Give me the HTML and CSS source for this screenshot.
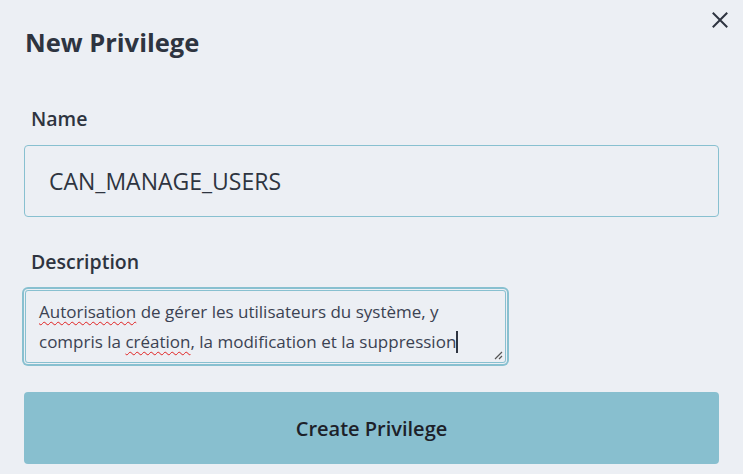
FILE: index.html
```html
<!DOCTYPE html>
<html lang="en">
<head>
<meta charset="utf-8">
<title>New Privilege</title>
<link rel="stylesheet" href="styles.css">
</head>
<body>
<div class="dialog">
  <button class="close" aria-label="Close">
    <svg width="16" height="16" viewBox="0 0 16 16"><path d="M1.5 1.5 L14.5 14.5 M14.5 1.5 L1.5 14.5" stroke="#2e3440" stroke-width="2" stroke-linecap="square" fill="none"/></svg>
  </button>
  <h2 class="title">New Privilege</h2>
  <form class="form">
    <div class="field field-name">
      <label class="label">Name</label>
      <div class="input">CAN_MANAGE_USERS</div>
    </div>
    <div class="field field-desc">
      <label class="label">Description</label>
      <div class="textarea" role="textbox"><span class="sq">Autorisation</span> de gérer les utilisateurs du système, y compris la <span class="sq">création</span>, la modification et la suppression<span class="caret"></span>
        <svg class="grip" width="10" height="10" viewBox="0 0 10 10"><path d="M9 2 L2 9 M9 6 L6 9" stroke="#555" stroke-width="1.2" fill="none"/></svg>
      </div>
    </div>
    <button type="button" class="submit">Create Privilege</button>
  </form>
</div>
</body>
</html>
```
FILE: styles.css
```css
* { box-sizing: border-box; }
html, body { margin: 0; padding: 0; }
body {
  background: #eceff4;
  font-family: "Open Sans", "Noto Sans", sans-serif;
  color: #2e3440;
  width: 743px;
  height: 474px;
  overflow: hidden;
}
.dialog {
  position: relative;
  padding: 24px 24px 0 24px;
}
.close {
  position: absolute;
  top: 12px;
  right: 15px;
  background: none;
  border: 0;
  padding: 0;
  width: 16px;
  height: 16px;
  display: flex;
}
.title {
  margin: 0;
  font-size: 25.5px;
  line-height: 36px;
  font-weight: 700;
  padding-left: 1px;
}
.form {
  display: flex;
  flex-direction: column;
  margin-top: 46px;
}
.field {
  display: flex;
  flex-direction: column;
  gap: 13px;
}
.label {
  font-size: 19.5px;
  line-height: 26px;
  font-weight: 600;
  padding-left: 7px;
}
.input {
  height: 72px;
  border: 1px solid #88c0d0;
  border-radius: 4px;
  padding: 0 24px;
  display: flex;
  align-items: center;
  font-size: 23px;
  color: #2e3440;
}
.field-desc {
  margin-top: 32px;
  gap: 15px;
}
.textarea {
  position: relative;
  width: 481px;
  height: 73px;
  margin-left: 1px;
  border: 1px solid #88c0d0;
  border-radius: 3px;
  box-shadow: 0 0 0 1px #eceff4, 0 0 0 3px #88c0d0;
  padding: 6px 13px;
  font-size: 17px;
  line-height: 30px;
  color: #3b4252;
}
.sq {
  text-decoration: underline wavy #e02020;
  text-decoration-thickness: 1px;
  text-underline-offset: 3px;
}
.caret {
  display: inline-block;
  width: 2px;
  height: 22px;
  background: #2e3440;
  vertical-align: -5px;
}
.grip {
  position: absolute;
  right: 2px;
  bottom: 2px;
}
.submit {
  margin-top: 29px;
  height: 72px;
  border: 0;
  border-radius: 4px;
  background: #88bfcf;
  font-family: inherit;
  font-size: 20px;
  font-weight: 600;
  color: #1d2129;
}
```
